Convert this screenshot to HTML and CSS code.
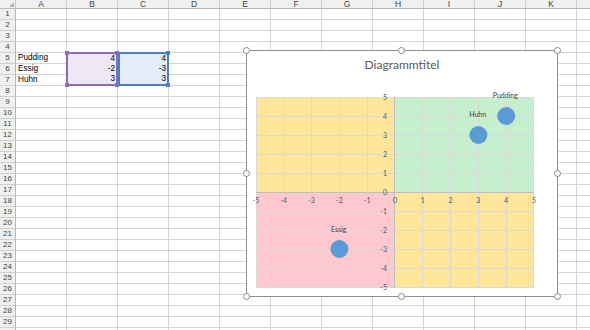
FILE: index.html
```html
<!DOCTYPE html>
<html lang="de">
<head>
  <meta charset="UTF-8">
  <meta name="viewport" content="width=device-width, initial-scale=1.0">
  <title>Mappe1 - Excel</title>
  <link rel="stylesheet" href="styles.css">
</head>
<body>
  <div class="sheet">
    <div class="col-heads">
      <div class="corner"></div>
      <div class="col-head">A</div>
      <div class="col-head">B</div>
      <div class="col-head">C</div>
      <div class="col-head">D</div>
      <div class="col-head">E</div>
      <div class="col-head">F</div>
      <div class="col-head">G</div>
      <div class="col-head">H</div>
      <div class="col-head">I</div>
      <div class="col-head">J</div>
      <div class="col-head">K</div>
      <div class="col-head col-rest"></div>
    </div>

    <div class="sheet-body">
      <div class="row-heads">
        <div class="row-head">1</div>
        <div class="row-head">2</div>
        <div class="row-head">3</div>
        <div class="row-head">4</div>
        <div class="row-head">5</div>
        <div class="row-head">6</div>
        <div class="row-head">7</div>
        <div class="row-head">8</div>
        <div class="row-head">9</div>
        <div class="row-head">10</div>
        <div class="row-head">11</div>
        <div class="row-head">12</div>
        <div class="row-head">13</div>
        <div class="row-head">14</div>
        <div class="row-head">15</div>
        <div class="row-head">16</div>
        <div class="row-head">17</div>
        <div class="row-head">18</div>
        <div class="row-head">19</div>
        <div class="row-head">20</div>
        <div class="row-head">21</div>
        <div class="row-head">22</div>
        <div class="row-head">23</div>
        <div class="row-head">24</div>
        <div class="row-head">25</div>
        <div class="row-head">26</div>
        <div class="row-head">27</div>
        <div class="row-head">28</div>
        <div class="row-head">29</div>
        <div class="row-head">30</div>
      </div>

      <div class="cells">
        <!-- A5:A7 -->
        <div class="labels">
          <div class="cell">Pudding</div>
          <div class="cell">Essig</div>
          <div class="cell">Huhn</div>
        </div>

        <!-- B5:B7, X-Werte -->
        <div class="range range-x">
          <div class="cell num">4</div>
          <div class="cell num">-2</div>
          <div class="cell num">3</div>
          <span class="handle h-tl"></span>
          <span class="handle h-tr"></span>
          <span class="handle h-bl"></span>
          <span class="handle h-br"></span>
        </div>

        <!-- C5:C7, Y-Werte -->
        <div class="range range-y">
          <div class="cell num">4</div>
          <div class="cell num">-3</div>
          <div class="cell num">3</div>
          <span class="handle h-tr"></span>
          <span class="handle h-br"></span>
        </div>
      </div>
    </div>

    <!-- Diagramm -->
    <div class="chart">
      <span class="knob k-tl"></span>
      <span class="knob k-tm"></span>
      <span class="knob k-tr"></span>
      <span class="knob k-ml"></span>
      <span class="knob k-mr"></span>
      <span class="knob k-bl"></span>
      <span class="knob k-bm"></span>
      <span class="knob k-br"></span>

      <div class="chart-title">Diagrammtitel</div>

      <svg class="plot" width="310" height="208" viewBox="0 0 310 208">
        <rect x="9" y="9" width="139" height="95" fill="#ffe699"/>
        <rect x="148" y="9" width="139" height="95" fill="#c6efce"/>
        <rect x="9" y="104" width="139" height="96" fill="#ffc7ce"/>
        <rect x="148" y="104" width="139" height="96" fill="#ffe699"/>

        <path class="grid" d="M9.5 9V200M36.5 9V200M64.5 9V200M92.5 9V200M120.5 9V200M175.5 9V200M203.5 9V200M231.5 9V200M259.5 9V200M286.5 9V200
          M9 9.5H287M9 28.5H287M9 47.5H287M9 66.5H287M9 85.5H287M9 123.5H287M9 142.5H287M9 161.5H287M9 180.5H287M9 199.5H287"/>
        <path class="axis" d="M147.5 9V200M9 104.5H287"/>

        <g class="tick-y">
          <text x="140" y="11.5">5</text>
          <text x="140" y="30.5">4</text>
          <text x="140" y="49.5">3</text>
          <text x="140" y="68.5">2</text>
          <text x="140" y="87.5">1</text>
          <text x="140" y="106.5">0</text>
          <text x="140" y="125.5">-1</text>
          <text x="140" y="144.5">-2</text>
          <text x="140" y="163.5">-3</text>
          <text x="140" y="182.5">-4</text>
          <text x="140" y="201.5">-5</text>
        </g>
        <g class="tick-x">
          <text x="9" y="115">-5</text>
          <text x="36.8" y="115">-4</text>
          <text x="64.6" y="115">-3</text>
          <text x="92.4" y="115">-2</text>
          <text x="120.2" y="115">-1</text>
          <text x="148" y="115">0</text>
          <text x="175.8" y="115">1</text>
          <text x="203.6" y="115">2</text>
          <text x="231.4" y="115">3</text>
          <text x="259.2" y="115">4</text>
          <text x="287" y="115">5</text>
        </g>

        <circle class="point" cx="259.2" cy="28" r="9"/>
        <circle class="point" cx="231.4" cy="47" r="9"/>
        <circle class="point" cx="92.4" cy="161" r="9"/>

        <g class="point-label">
          <text x="258.3" y="10.2">Pudding</text>
          <text x="230.7" y="28.8">Huhn</text>
          <text x="91.7" y="143.8">Essig</text>
        </g>
      </svg>
    </div>
  </div>
</body>
</html>
```

FILE: styles.css
```css
body {
  margin: 0;
  padding: 0;
  background: #fff;
  font-family: "Liberation Sans", Arial, sans-serif;
  color: #000;
  overflow: hidden;
}
.sheet {
  position: relative;
  height: 330px;
  overflow: hidden;
}

/* Spaltenkoepfe */
.col-heads {
  display: flex;
  height: 9px;
  box-sizing: border-box;
  background: #f0f0f0;
  border-bottom: 1px solid #b8b8b8;
}
.corner {
  position: relative;
  width: 16px;
  flex: none;
  box-sizing: border-box;
  border-right: 1px solid #c8c8c8;
}
.corner::after {
  content: "";
  position: absolute;
  right: 1px;
  bottom: 1px;
  border-left: 5px solid transparent;
  border-bottom: 5px solid #b4b4b4;
}
.col-head {
  width: 51px;
  flex: none;
  box-sizing: border-box;
  border-right: 1px solid #d0d0d0;
  font-size: 8.5px;
  line-height: 8px;
  text-align: center;
  color: #444;
}
.col-rest {
  flex: 1;
  border-right: none;
}

/* Zeilenkoepfe + Zellen */
.sheet-body {
  display: flex;
}
.row-heads {
  width: 16px;
  flex: none;
  background: #f0f0f0;
  box-sizing: border-box;
  border-right: 1px solid #b8b8b8;
}
.row-head {
  height: 11px;
  box-sizing: border-box;
  border-bottom: 1px solid #d0d0d0;
  font-size: 8px;
  line-height: 10px;
  text-align: center;
  color: #444;
}
.cells {
  flex: 1;
  display: grid;
  grid-template-columns: repeat(11, 51px) 1fr;
  grid-auto-rows: 11px;
  height: 321px;
  background-image:
    linear-gradient(to left, #d4d4d4 1px, transparent 1px),
    linear-gradient(to top, #d4d4d4 1px, transparent 1px);
  background-size: 51px 11px;
}
.cell {
  height: 10px;
  line-height: 10px;
  font-size: 8.2px;
  padding: 0 2px;
  white-space: nowrap;
}
.labels {
  grid-column: 1;
  grid-row: 5 / span 3;
  display: flex;
  flex-direction: column;
  gap: 1px;
}
.num {
  text-align: right;
  padding-right: 1px;
}

/* markierte Bereiche */
.range {
  position: relative;
  grid-row: 5 / span 3;
  box-sizing: border-box;
  border: 2px solid;
}
.range-x {
  grid-column: 2;
  margin: -1px 0 0 -1px;
  border-color: #8e6bb8;
  background: #ede8f4;
}
.range-y {
  grid-column: 3;
  margin: -1px 0 0 0;
  border-color: #4d7fc4;
  background: #e4ecf8;
}
.handle {
  position: absolute;
  width: 4px;
  height: 4px;
  background: inherit;
}
.range-x .handle { background: #8e6bb8; }
.range-y .handle { background: #4d7fc4; }
.h-tl { left: -3px; top: -3px; }
.h-tr { right: -3px; top: -3px; }
.h-bl { left: -3px; bottom: -3px; }
.h-br { right: -3px; bottom: -3px; }

/* Diagramm */
.chart {
  position: absolute;
  left: 246px;
  top: 50px;
  width: 312px;
  height: 247px;
  box-sizing: border-box;
  border: 1px solid #8f8f8f;
  background: #fff;
  font-family: Lato, "Liberation Sans", sans-serif;
}
.chart-title {
  height: 37px;
  box-sizing: border-box;
  padding-top: 7px;
  font-size: 12px;
  line-height: 14px;
  text-align: center;
  color: #595959;
}
.plot {
  display: block;
}
.grid {
  fill: none;
  stroke: #d9d9d9;
  stroke-width: 1;
}
.axis {
  fill: none;
  stroke: #bfbfbf;
  stroke-width: 1;
}
.tick-y text,
.tick-x text {
  font-size: 7px;
  fill: #595959;
}
.tick-y text { text-anchor: end; }
.tick-x text { text-anchor: middle; }
.point {
  fill: #5b9bd5;
}
.point-label text {
  font-size: 7px;
  fill: #404040;
  text-anchor: middle;
}
.knob {
  position: absolute;
  width: 7px;
  height: 7px;
  box-sizing: border-box;
  border: 1px solid #8a8a8a;
  border-radius: 50%;
  background: #fff;
}
.k-tl { left: -4px; top: -4px; }
.k-tm { left: calc(50% - 4px); top: -4px; }
.k-tr { right: -4px; top: -4px; }
.k-ml { left: -4px; top: calc(50% - 4px); }
.k-mr { right: -4px; top: calc(50% - 4px); }
.k-bl { left: -4px; bottom: -4px; }
.k-bm { left: calc(50% - 4px); bottom: -4px; }
.k-br { right: -4px; bottom: -4px; }
```
